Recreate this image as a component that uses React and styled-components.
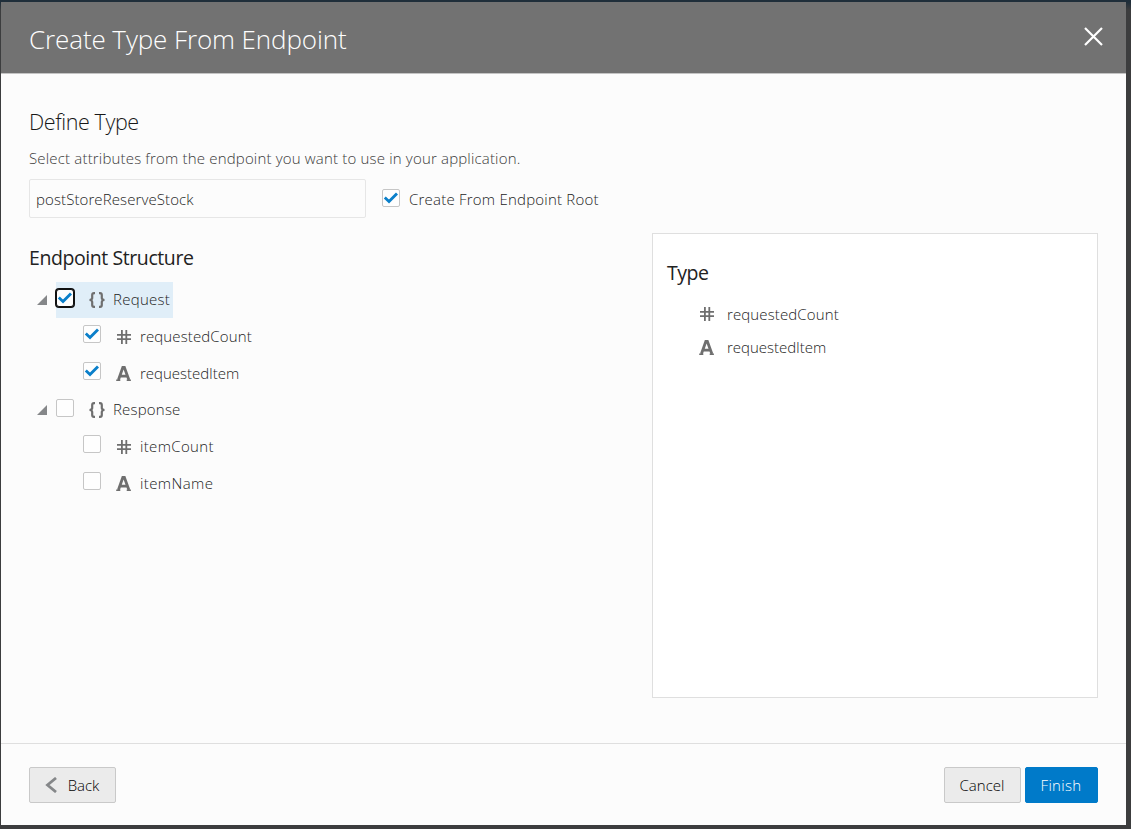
import React from "react";
import styled, { createGlobalStyle, css } from "styled-components";

const GlobalStyle = createGlobalStyle`
  * { box-sizing: border-box; }
  body {
    margin: 0;
    background: linear-gradient(#1f2e3a 0, #1f2e3a 2px, #3c3d3e 10px);
    font-family: "Open Sans", "Noto Sans", sans-serif;
    font-weight: 300;
    font-size: 15px;
    color: #1c1c1c;
  }
`;

const Page = styled.div`
  height: 829px;
  padding: 2px 5px 4px 1px;
  overflow: hidden;
`;

const Dialog = styled.section`
  height: 823px;
  display: flex;
  flex-direction: column;
  background: #fcfcfc;
`;

const Header = styled.header`
  height: 72px;
  display: flex;
  justify-content: space-between;
  padding: 0 23.5px 0 28px;
  background: #727272;
  border-bottom: 1px solid #c4c4c4;
  flex: none;
`;

const Label = styled.span`
  white-space: nowrap;
  letter-spacing: ${(p) => p.$spacing || 0}px;
`;

const Title = styled.h1`
  margin: 0;
  font-size: 26px;
  font-weight: 300;
  line-height: 74px;
  color: #fff;
`;

const CloseButton = styled.button`
  width: 19px;
  height: 19px;
  margin-top: 25px;
  padding: 0;
  border: 0;
  background: none;
  color: #fff;
  svg { display: block; }
`;

const Body = styled.main`
  flex: 1;
  padding: 32px 28px 0;
`;

const PageHeading = styled.h2`
  margin: 0;
  font-size: 21.5px;
  font-weight: 300;
  line-height: 32px;
  color: #181818;
`;

const Description = styled.p`
  margin: 10px 0;
  line-height: 21px;
  color: #3a3a3a;
`;

const FormRow = styled.div`
  display: flex;
  align-items: center;
`;

const NameInput = styled.div`
  width: 337px;
  height: 39px;
  margin-right: 16px;
  padding-left: 6px;
  border: 1px solid #e6e6e6;
  border-radius: 2px;
  line-height: 38px;
`;

const Box = styled.span`
  width: 18px;
  height: 18px;
  flex: none;
  position: relative;
  top: -1px;
  display: flex;
  align-items: center;
  justify-content: center;
  background: #fefefe;
  border: 1px solid #c6c6c6;
  border-radius: 2px;
  ${(p) => p.$focused && css`
    border-color: #111;
    box-shadow: 0 0 0 1px #111;
    border-radius: 3px;
  `}
`;

const RootLabel = styled.span`
  margin-left: 9px;
`;

const Columns = styled.div`
  display: grid;
  grid-template-columns: 623px 446px;
  margin-top: 15px;
`;

const SectionHeading = styled.h3`
  margin: 0;
  font-size: 19.5px;
  font-weight: 400;
  line-height: 28px;
  color: #222;
`;

const Structure = styled.div`
  padding-top: 11px;
`;

const Tree = styled.div`
  padding-top: 10px;
`;

const TreeRow = styled.div`
  height: 36.75px;
  display: flex;
  align-items: flex-start;
  padding-left: ${(p) => (p.$depth ? 54 : 8)}px;
`;

const Disclosure = styled.span`
  width: 11px;
  height: 36px;
  margin-right: 8px;
  padding-top: 13px;
  svg { display: block; }
`;

const Node = styled.span`
  height: 36px;
  display: flex;
  align-items: flex-start;
  padding-right: 3px;
  background: ${(p) => (p.$selected ? "#e0eef8" : "transparent")};
`;

const NodeCheck = styled.span`
  display: flex;
  padding-top: ${(p) => (p.$depth ? 7 : 8)}px;
`;

const NodeIcon = styled.span`
  display: flex;
  justify-content: center;
  width: 16px;
  margin: ${(p) => (p.$kind === "number" ? 11 : 10)}px 8px 0 15px;
  color: #6f6f6f;
`;

const NodeLabel = styled.span`
  line-height: 34px;
`;

const TypePanel = styled.aside`
  height: 465px;
  padding: 25px 14px;
  background: #fff;
  border: 1px solid #dfdfdf;
`;

const AttributeRow = styled.div`
  display: flex;
  align-items: center;
  height: 33px;
  padding-left: 32px;
`;

const AttributeIcon = styled.span`
  display: flex;
  justify-content: center;
  width: 16px;
  margin-right: 12px;
  padding-top: ${(p) => (p.$kind === "string" ? 1 : 0)}px;
  color: #6f6f6f;
`;

const AttributeList = styled.div`
  padding-top: 10px;
`;

const Footer = styled.footer`
  height: 82px;
  flex: none;
  display: flex;
  justify-content: space-between;
  padding: 23px 28px 0;
  border-top: 1px solid #dfdfdf;
`;

const Actions = styled.div`
  display: flex;
  gap: 4px;
`;

const Button = styled.button`
  width: ${(p) => p.$width}px;
  height: 36px;
  display: flex;
  align-items: center;
  justify-content: center;
  padding: 0 1px 0 0;
  font: inherit;
  border-radius: 2px;
  border: 1px solid ${(p) => (p.$primary ? "#007ac9" : "#c9c9c9")};
  background: ${(p) => (p.$primary ? "#007ac9" : "#ebebeb")};
  color: ${(p) => (p.$primary ? "#fff" : "#000")};
  svg { margin-right: 11px; }
`;

const CheckIcon = () => (
  <svg width="16" height="16" viewBox="0 0 16 16" fill="none">
    <path d="M1.8 7.6 6 11.6 14 3.4" stroke="#0a7fca" strokeWidth="2.8" />
  </svg>
);

const BracesIcon = () => (
  <svg width="16" height="16" viewBox="0 0 16 16" fill="none" stroke="currentColor" strokeWidth="2.2">
    <path d="M6 1.1H5Q3.2 1.1 3.2 3V6Q3.2 7.7 0.6 8Q3.2 8.3 3.2 10V13Q3.2 14.9 5 14.9H6" />
    <path d="M10 1.1H11Q12.8 1.1 12.8 3V6Q12.8 7.7 15.4 8Q12.8 8.3 12.8 10V13Q12.8 14.9 11 14.9H10" />
  </svg>
);

const HashIcon = () => (
  <svg width="14" height="14" viewBox="0 0 14 14" fill="none" stroke="currentColor">
    <path d="M0 4.8H14M0 9.2H14" strokeWidth="1.8" />
    <path d="M4.9 0V14M9.3 0V14" strokeWidth="1.8" />
  </svg>
);

const LetterIcon = () => (
  <svg width="16" height="15" viewBox="0 0 16 15" fill="none" stroke="currentColor">
    <path d="M2.4 14 6.9 1.2H8.3L12.9 14M4.3 10.1H10.8" strokeWidth="2.8" />
    <path d="M0.2 14.3H4.3M10.7 14.3H14.9" strokeWidth="1.4" />
  </svg>
);

const TriangleIcon = () => (
  <svg width="11" height="10" viewBox="0 0 11 10">
    <path d="M0 10 10 0V10Z" fill="#858789" />
  </svg>
);

const icons = { object: BracesIcon, number: HashIcon, string: LetterIcon };

const nodes = [
  { name: "Request", kind: "object", checked: true, focused: true, spacing: 0.28 },
  { name: "requestedCount", kind: "number", depth: 1, checked: true, spacing: 0.12 },
  { name: "requestedItem", kind: "string", depth: 1, checked: true, spacing: -0.02 },
  { name: "Response", kind: "object", spacing: 0.2 },
  { name: "itemCount", kind: "number", depth: 1, spacing: 0.35 },
  { name: "itemName", kind: "string", depth: 1, spacing: 0.4 },
];

const Checkbox = ({ checked, focused }) => (
  <Box role="checkbox" aria-checked={!!checked} $focused={focused}>
    {checked && <CheckIcon />}
  </Box>
);

const TreeNode = ({ node }) => {
  const Icon = icons[node.kind];
  return (
    <TreeRow $depth={node.depth}>
      {!node.depth && <Disclosure><TriangleIcon /></Disclosure>}
      <Node $selected={node.focused}>
        <NodeCheck $depth={node.depth}>
          <Checkbox checked={node.checked} focused={node.focused} />
        </NodeCheck>
        <NodeIcon $kind={node.kind}><Icon /></NodeIcon>
        <NodeLabel><Label $spacing={node.spacing}>{node.name}</Label></NodeLabel>
      </Node>
    </TreeRow>
  );
};

export default function App() {
  return (
    <Page>
      <GlobalStyle />
      <Dialog role="dialog">
        <Header>
          <Title><Label $spacing={-0.1}>Create Type From Endpoint</Label></Title>
          <CloseButton aria-label="Close">
            <svg width="19" height="19" viewBox="0 0 19 19" stroke="currentColor" strokeWidth="2.2">
              <path d="M1 1 18 18M18 1 1 18" />
            </svg>
          </CloseButton>
        </Header>
        <Body>
          <PageHeading><Label $spacing={-0.4}>Define Type</Label></PageHeading>
          <Description>
            <Label $spacing={0.175}>Select attributes from the endpoint you want to use in your application.</Label>
          </Description>
          <FormRow>
            <NameInput><Label $spacing={0.1}>postStoreReserveStock</Label></NameInput>
            <Checkbox checked />
            <RootLabel><Label $spacing={0.22}>Create From Endpoint Root</Label></RootLabel>
          </FormRow>
          <Columns>
            <Structure>
              <SectionHeading><Label $spacing={-0.42}>Endpoint Structure</Label></SectionHeading>
              <Tree>
                {nodes.map((n) => <TreeNode key={n.name} node={n} />)}
              </Tree>
            </Structure>
            <TypePanel>
              <SectionHeading><Label $spacing={-0.45}>Type</Label></SectionHeading>
              <AttributeList>
                {nodes.slice(1, 3).map((n) => {
                  const Icon = icons[n.kind];
                  return (
                    <AttributeRow key={n.name}>
                      <AttributeIcon $kind={n.kind}><Icon /></AttributeIcon>
                      <Label $spacing={n.spacing}>{n.name}</Label>
                    </AttributeRow>
                  );
                })}
              </AttributeList>
            </TypePanel>
          </Columns>
        </Body>
        <Footer>
          <Button $width={87}>
            <svg width="12" height="16" viewBox="0 0 12 16" fill="none" stroke="#858789" strokeWidth="2.8">
              <path d="M11 1 2.5 8 11 15" />
            </svg>
            <Label>Back</Label>
          </Button>
          <Actions>
            <Button $width={77}><Label>Cancel</Label></Button>
            <Button $width={73} $primary><Label $spacing={0.3}>Finish</Label></Button>
          </Actions>
        </Footer>
      </Dialog>
    </Page>
  );
}
